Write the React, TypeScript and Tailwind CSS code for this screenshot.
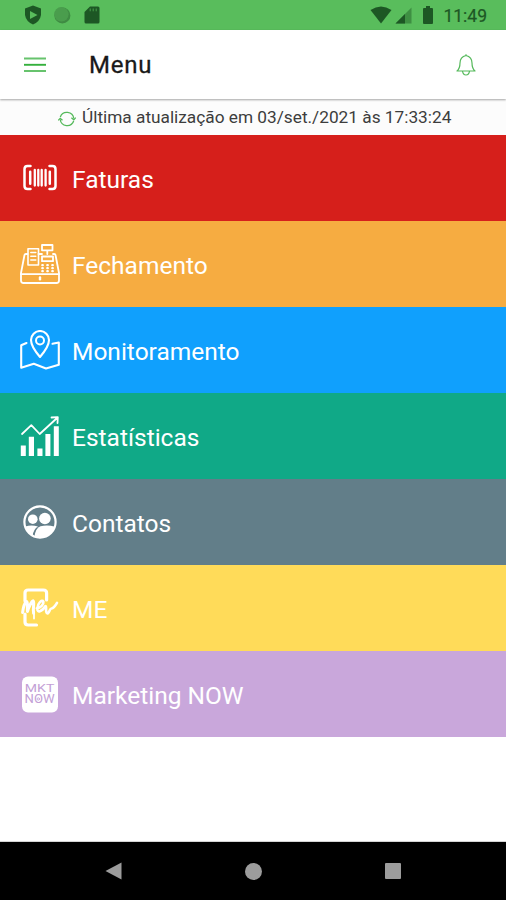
import React, { ReactNode } from 'react';
import { clsx } from 'clsx';

interface IconProps {
  children: ReactNode;
}

const RowIcon = ({ children }: IconProps) => (
  <svg
    viewBox="0 0 40 40"
    className="size-10 shrink-0"
    fill="none"
    stroke="white"
    strokeWidth={1.7}
    strokeLinecap="round"
    strokeLinejoin="round"
  >
    {children}
  </svg>
);

const BarcodeIcon = () => (
  <RowIcon>
    <path
      d="M10.5 8H7.5Q4.5 8 4.5 11V28Q4.5 31 7.5 31H10.5M29.5 8H32.5Q35.5 8 35.5 11V28Q35.5 31 32.5 31H29.5"
      strokeWidth={2.5}
    />
    <path d="M10.2 13.8V25.7M29.8 13.8V25.7" strokeWidth={2.5} />
    <path d="M14.8 12V27.5M18.3 12V27.5M21.7 12V27.5M25.6 12V27.5" strokeWidth={2.3} />
  </RowIcon>
);

const RegisterIcon = () => (
  <RowIcon>
    <path
      d="M7.5 10H5.8Q4.8 10 4.5 11L1 29V36.5Q1 39 3.5 39H36.5Q39 39 39 36.5V29L35.5 11Q35.3 10 34.3 10H33"
      strokeWidth={1.8}
    />
    <path d="M1 30.2H39" strokeWidth={1.8} />
    <path d="M8 21V4.8H18.5V21Z" strokeWidth={1.6} />
    <path d="M10.8 8.5H15.8M10.8 12.2H15.8M10.8 16H15.8" strokeWidth={1.5} />
    <path d="M22 1H32.5V6.3H22ZM27.3 6.3V10M18.5 10H22M22 12.5H33V17.2H22Z" strokeWidth={1.8} />
    <path
      d="M22.3 21.2H22.8M27.3 21.2H27.8M32.3 21.2H32.8M22.3 24.2H22.8M27.3 24.2H27.8M32.3 24.2H32.8M22.3 27.2H22.8M27.3 27.2H27.8M32.3 27.2H32.8"
      strokeWidth={2.3}
    />
    <path d="M20 33.4V35.3" strokeWidth={2.4} />
  </RowIcon>
);

const MapIcon = () => (
  <RowIcon>
    <path d="M6.5 13L1.2 15.3V37.8L13.8 33.8L26 38.5L38.8 34.8V12.5L32.5 13.8" strokeWidth={2.1} />
    <path d="M20 27Q11 16.5 11 10A9 9 0 0 1 29 10Q29 16.5 20 27Z" strokeWidth={2.1} />
    <circle cx="20" cy="10.5" r="4" strokeWidth={2} />
  </RowIcon>
);

const ChartIcon = () => (
  <RowIcon>
    <path
      d="M.8 29.5H5.8V40H.8ZM8.8 20.8H14V40H8.8ZM17.4 32.5H22.5V40H17.4ZM25.4 18H30.4V40H25.4ZM33.8 10.2H38.8V40H33.8Z"
      fill="white"
      stroke="none"
    />
    <path d="M2 18L11.3 9.2L19.7 18L36.5 2.5M31.5 1.5L37.8 1.2L37.5 7" strokeWidth={1.8} />
  </RowIcon>
);

const ContactsIcon = () => (
  <RowIcon>
    <circle cx="20" cy="20" r="15.6" strokeWidth={2.2} />
    <g fill="white" stroke="none">
      <circle cx="12.8" cy="17.2" r="4.8" />
      <circle cx="24.9" cy="16.5" r="5.8" />
      <path d="M5.4 24.4Q11.8 22.3 18 24.6Q13.5 27.3 12.7 33.7Q7.3 30.8 5.4 24.4Z" />
      <path d="M14.4 34.8Q15.5 26.2 20.5 24.3Q27.5 22.4 35 24.8Q31.5 35.5 20 35.8Q17 35.8 14.4 34.8Z" />
    </g>
  </RowIcon>
);

const MeIcon = () => (
  <RowIcon>
    <path d="M5 13V5Q5 2 8.2 2H23.3Q26.6 2 26.6 5V12M5 26V34Q5 37 8.2 37H16.5" strokeWidth={3.2} />
    <path
      d="M2.6 24.5C3.2 20 4.6 15 6.2 13.6C8 13 7.2 20 7.4 23.5C8.6 19.5 11.6 13 13.2 12.8C14.8 13.5 12.6 20 13.6 25.2"
      strokeWidth={3}
    />
    <path
      d="M16.8 20.3C20.5 19.8 24 16.5 23.4 13.6C22 11.2 17.6 15 17.3 20.5C17.3 25.2 21.5 24 25.5 18C27 18 24.8 25.8 27.8 25.4C30 24 29.5 20.5 31.5 20.5Q34 20 37 14.8"
      strokeWidth={2.6}
    />
    <path d="M14 24V30.5" strokeWidth={1.8} />
  </RowIcon>
);

const MarketingIcon = () => (
  <RowIcon>
    <rect x="2" y="2.6" width="36" height="36" rx="6" fill="white" stroke="none" />
    <g fill="#c3a0d6" stroke="none" fontFamily="Roboto, sans-serif">
      <text x="4.8" y="18" textLength="29.5" lengthAdjust="spacingAndGlyphs" fontSize="10">
        MKT
      </text>
      <text x="4.6" y="29.2" textLength="30" lengthAdjust="spacingAndGlyphs" fontSize="12">
        NOW
      </text>
    </g>
    <circle cx="18.3" cy="25" r="1.2" stroke="#c3a0d6" strokeWidth={0.8} />
  </RowIcon>
);

const items = [
  { label: 'Faturas', color: 'bg-[#d61f1b]', icon: <BarcodeIcon /> },
  { label: 'Fechamento', color: 'bg-[#f6ac41]', icon: <RegisterIcon /> },
  { label: 'Monitoramento', color: 'bg-[#10a0fd]', icon: <MapIcon /> },
  { label: 'Estatísticas', color: 'bg-[#10a987]', icon: <ChartIcon /> },
  { label: 'Contatos', color: 'bg-[#627e89]', icon: <ContactsIcon /> },
  { label: 'ME', color: 'bg-[#ffdb59]', icon: <MeIcon /> },
  { label: 'Marketing NOW', color: 'bg-[#c9a7db]', icon: <MarketingIcon /> },
];

const StatusBar = () => (
  <div className="flex h-[30px] shrink-0 items-center bg-[#59bd5c] pl-6 pr-[19px] text-[#1d5724]">
    <svg viewBox="0 0 18 20" className="h-5 w-[18px]" fill="currentColor">
      <path d="M9 .5L17 3.5V10Q16 16.5 9 19.5Q2 16.5 1 10V3.5Z" />
      <path d="M6 6V14L13.5 10Z" fill="#59bd5c" />
    </svg>
    <svg viewBox="0 0 18 18" className="ml-[11px] size-[18px]">
      <circle cx="9.4" cy="9.4" r="8" fill="#3f8b43" />
      <circle cx="8.4" cy="8.3" r="7.2" fill="#4a9d4d" />
    </svg>
    <svg viewBox="0 0 16 18" className="ml-[13px] h-[18px] w-4" fill="currentColor">
      <path d="M6 .5H14Q15.5 .5 15.5 2V16Q15.5 17.5 14 17.5H2Q.5 17.5 .5 16V6Z" />
      <path d="M6.2 2.5V5.3M9.2 2.5V5.3M12.2 2.5V5.3" stroke="#59bd5c" strokeWidth={1} opacity={0.7} />
    </svg>
    <div className="ml-auto flex items-center">
      <svg viewBox="0 0 22 18" className="h-[18px] w-[22px]" fill="currentColor">
        <path d="M.5 4Q11-3 21.5 4L11 17.5Z" />
      </svg>
      <svg viewBox="0 0 17 17" className="ml-[3px] mt-px size-[17px]" fill="currentColor">
        <path d="M16.5 .5V16.5H.5Z" opacity={0.45} />
        <path d="M10 7V16.5H.5Z" />
      </svg>
      <svg viewBox="0 0 12 18" className="ml-2.5 h-[18px] w-3" fill="currentColor">
        <path d="M4 0H8V2H10Q11 2 11 3V17Q11 18 10 18H2Q1 18 1 17V3Q1 2 2 2H4Z" />
      </svg>
      <span className="ml-[9px] mt-0.5 text-[17.5px] leading-5 [-webkit-text-stroke:0.2px]">11:49</span>
    </div>
  </div>
);

const Header = () => (
  <header className="z-10 flex h-[69px] shrink-0 items-center bg-white pl-6 pr-[30px] shadow-[0_1px_2px_rgba(0,0,0,0.35)]">
    <svg viewBox="0 0 22 16" className="h-4 w-[22px]" stroke="#35b03d" strokeWidth={1.9}>
      <path d="M0 1.5H22M0 14H22" opacity={0.75} />
      <path d="M0 7.8H22" />
    </svg>
    <h1 className="ml-[43px] text-2xl tracking-[0.8px] text-[#191919] [-webkit-text-stroke:0.3px]">
      Menu
    </h1>
    <svg
      viewBox="0 0 20 24"
      className="ml-auto h-6 w-5"
      fill="none"
      stroke="#55b95b"
      strokeWidth={1.2}
      strokeLinejoin="round"
    >
      <path d="M10 1.3V2.5Q4 4 4 10Q4 15.5 1 18H19Q16 15.5 16 10Q16 4 10 2.5" />
      <path d="M6.5 18Q7 22 10 22Q13 22 13.5 18" />
    </svg>
  </header>
);

const LastUpdate = () => (
  <div className="flex h-9 shrink-0 items-center bg-[#fcfcfc] pl-[58px] text-[#3d3d3d]">
    <svg viewBox="0 0 18 18" className="mt-[3px] size-[18px]" fill="none" stroke="#55b95b" strokeWidth={1.3}>
      <path d="M2.3 7A7 7 0 0 1 15.8 8.5M15.7 11A7 7 0 0 1 2.2 9.5" />
      <path d="M13.4 7.8L15.8 9.8L17.8 7.6M.2 10.4L2.2 8.4L4.5 10.3" />
    </svg>
    <span className="ml-1.5 whitespace-nowrap text-[17.25px] leading-5">
      Última atualização em 03/set./2021 às 17:33:24
    </span>
  </div>
);

const NavigationBar = () => (
  <nav className="flex h-[58px] shrink-0 items-center justify-between bg-black pl-[105px] pr-[105px] shadow-[0_-1px_0_#d4d4d4]">
    <svg viewBox="0 0 17 18" className="h-[18px] w-[17px]" fill="#9c9c9c">
      <path d="M.5 9L16.5 .5V17.5Z" />
    </svg>
    <div className="size-[17px] rounded-full bg-[#9c9c9c]" />
    <div className="size-4 rounded-[1px] bg-[#9c9c9c]" />
  </nav>
);

export default function App() {
  return (
    <div className="flex h-[900px] w-[506px] flex-col overflow-hidden bg-white font-[Roboto,sans-serif]">
      <StatusBar />
      <Header />
      <LastUpdate />
      <main className="flex-1">
        {items.map(({ label, color, icon }) => (
          <div key={label} className={clsx('flex h-[86px] items-center gap-3 pl-5', color)}>
            {icon}
            <span className="mt-1 whitespace-nowrap text-[24.5px] text-white">{label}</span>
          </div>
        ))}
      </main>
      <NavigationBar />
    </div>
  );
}
